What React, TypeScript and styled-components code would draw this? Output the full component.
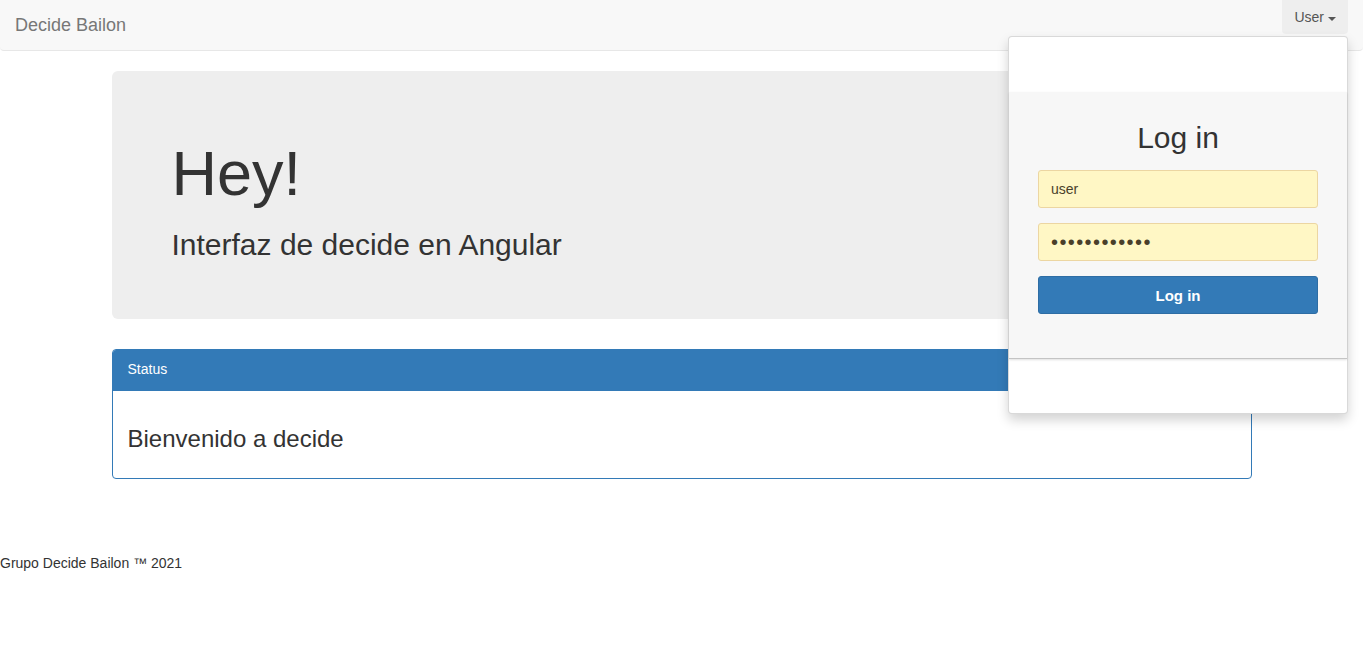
import React from 'react'
import styled, { createGlobalStyle } from 'styled-components'

const GlobalStyle = createGlobalStyle`
  html, body {
    margin: 0;
    padding: 0;
    background: #fff;
  }
  body {
    font-family: "Liberation Sans", Arial, Helvetica, sans-serif;
    font-size: 14px;
    line-height: 1.42857;
    color: #333;
  }
  * {
    box-sizing: border-box;
  }
`

const Navbar = styled.nav`
  display: flex;
  justify-content: space-between;
  align-items: flex-start;
  height: 51px;
  padding: 0 15px;
  margin-bottom: 20px;
  background: #f8f8f8;
  border-bottom: 1px solid #e7e7e7;
  border-radius: 0 0 4px 4px;
`

const Brand = styled.a`
  display: block;
  padding: 15px 0;
  font-size: 18px;
  line-height: 20px;
  color: #777;
  text-decoration: none;
`

const NavItem = styled.div`
  position: relative;
`

const Toggle = styled.a`
  display: flex;
  align-items: center;
  gap: 4px;
  height: 34px;
  padding: 1px 12px 0 12px;
  color: #555;
  background: #eee;
  border-radius: 0 0 4px 4px;
  text-decoration: none;
  cursor: pointer;
`

const Caret = styled.span`
  display: inline-block;
  width: 0;
  height: 0;
  margin-top: 2px;
  border-top: 4px solid #555;
  border-right: 4px solid transparent;
  border-left: 4px solid transparent;
`

const Dropdown = styled.div`
  position: absolute;
  top: 36px;
  right: 0;
  width: 340px;
  background: #fff;
  border: 1px solid rgba(0, 0, 0, 0.15);
  border-radius: 4px;
  box-shadow: 0 6px 12px rgba(0, 0, 0, 0.175);
  z-index: 10;
`

const Spacer = styled.div<{ $h: number }>`
  height: ${(p) => p.$h}px;
`

const LoginForm = styled.form`
  display: flex;
  flex-direction: column;
  gap: 15px;
  padding: 26px 29px 44px;
  background: #f7f7f7;
  border-bottom: 1px solid #c4c4c4;
  box-shadow: 0 1px 2px rgba(0, 0, 0, 0.12);
`

const FormTitle = styled.h2`
  margin: 0 0 -3px;
  font-size: 30px;
  font-weight: 500;
  line-height: 40px;
  text-align: center;
  color: #333;
`

const Input = styled.input<{ $dots?: boolean }>`
  display: block;
  width: 100%;
  height: 38px;
  padding: 0 12px;
  font-family: inherit;
  font-size: ${(p) => (p.$dots ? '20px' : '14px')};
  letter-spacing: ${(p) => (p.$dots ? '1.4px' : 'normal')};
  color: #4a3f2a;
  background: #fff7c5;
  border: 1px solid #ecd6a2;
  border-radius: 3px;
  outline: none;
`

const SubmitButton = styled.button`
  display: block;
  width: 100%;
  height: 38px;
  font-family: inherit;
  font-size: 15px;
  font-weight: 700;
  color: #fff;
  background: #337ab7;
  border: 1px solid #2e6da4;
  border-radius: 3px;
  cursor: pointer;
`

const Container = styled.div`
  width: 1170px;
  margin: 0 auto;
  padding: 0 15px;
`

const Jumbotron = styled.div`
  padding: 48px 60px;
  margin-bottom: 30px;
  background: #eee;
  border-radius: 6px;
`

const HeroTitle = styled.h1`
  margin: 20px 0 10px;
  font-size: 63px;
  font-weight: 500;
  line-height: 1.1;
`

const HeroSubtitle = styled.h2`
  margin: 20px 0 10px;
  font-size: 30px;
  font-weight: 500;
  line-height: 1.1;
`

const Panel = styled.div`
  margin-bottom: 20px;
  background: #fff;
  border: 1px solid #337ab7;
  border-radius: 4px;
`

const PanelHeading = styled.div`
  padding: 10px 15px;
  color: #fff;
  background: #337ab7;
  border-bottom: 1px solid #337ab7;
  border-radius: 3px 3px 0 0;
`

const PanelBody = styled.div`
  padding: 15px;
`

const PanelText = styled.h3`
  margin: 20px 0 10px;
  font-size: 24px;
  font-weight: 500;
  line-height: 1.1;
`

const Footer = styled.footer`
  padding-top: 54px;
  line-height: 20px;
`

export default function App() {
  return (
    <>
      <GlobalStyle />
      <Navbar>
        <Brand href="#">Decide Bailon</Brand>
        <NavItem>
          <Toggle>
            User <Caret />
          </Toggle>
          <Dropdown>
            <Spacer $h={55} />
            <LoginForm onSubmit={(e) => e.preventDefault()}>
              <FormTitle>Log in</FormTitle>
              <Input type="text" defaultValue="user" />
              <Input type="password" $dots defaultValue="decidebailon" />
              <SubmitButton type="submit">Log in</SubmitButton>
            </LoginForm>
            <Spacer $h={54} />
          </Dropdown>
        </NavItem>
      </Navbar>
      <Container>
        <Jumbotron>
          <HeroTitle>Hey!</HeroTitle>
          <HeroSubtitle>Interfaz de decide en Angular</HeroSubtitle>
        </Jumbotron>
        <Panel>
          <PanelHeading>Status</PanelHeading>
          <PanelBody>
            <PanelText>Bienvenido a decide</PanelText>
          </PanelBody>
        </Panel>
      </Container>
      <Footer>Grupo Decide Bailon ™ 2021</Footer>
    </>
  )
}
